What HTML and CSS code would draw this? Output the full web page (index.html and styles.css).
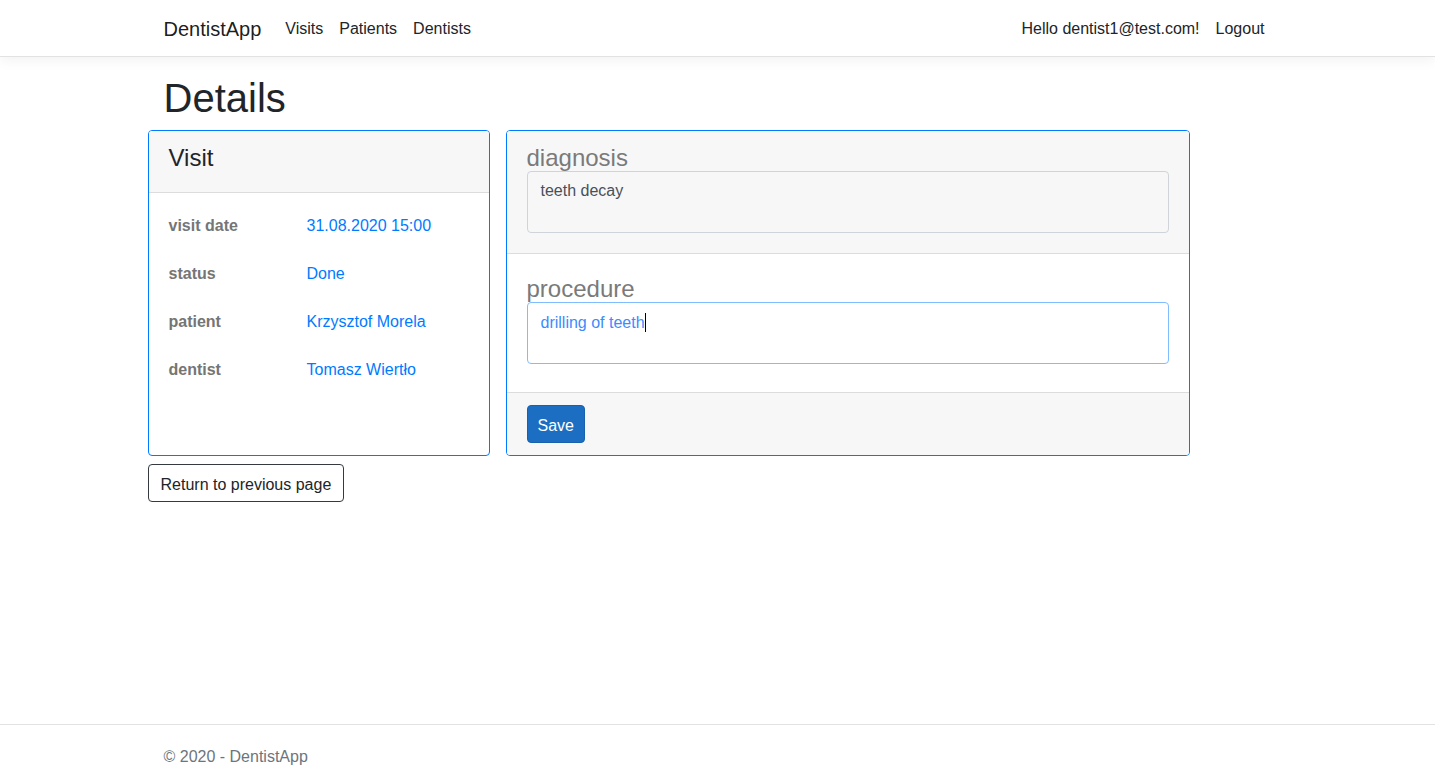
FILE: index.html
```
<!DOCTYPE html>
<html lang="en">
<head>
<meta charset="utf-8">
<title>Details - DentistApp</title>
<link rel="stylesheet" href="styles.css">
</head>
<body>
<header class="navbar">
  <div class="container nav-inner">
    <a class="brand" href="#">DentistApp</a>
    <nav class="nav-links">
      <a class="nav-link" href="#">Visits</a>
      <a class="nav-link" href="#">Patients</a>
      <a class="nav-link" href="#">Dentists</a>
    </nav>
    <div class="nav-right">
      <span class="nav-link">Hello dentist1@test.com!</span>
      <span class="nav-link">Logout</span>
    </div>
  </div>
</header>
<main class="main">
  <div class="container">
    <h1 class="page-title">Details</h1>
  </div>
  <div class="content">
    <div class="cards">
      <section class="card card-visit">
        <div class="card-header">
          <h4 class="card-title">Visit</h4>
        </div>
        <div class="card-body">
          <dl class="details">
            <div class="detail-row"><dt>visit date</dt><dd>31.08.2020 15:00</dd></div>
            <div class="detail-row"><dt>status</dt><dd>Done</dd></div>
            <div class="detail-row"><dt>patient</dt><dd>Krzysztof Morela</dd></div>
            <div class="detail-row"><dt>dentist</dt><dd>Tomasz Wiertło</dd></div>
          </dl>
        </div>
      </section>
      <section class="card card-form">
        <div class="form-sec sec-diagnosis">
          <label class="field-label">diagnosis</label>
          <div class="textbox readonly">teeth decay</div>
        </div>
        <div class="form-sec sec-procedure">
          <label class="field-label">procedure</label>
          <div class="textbox focused">drilling of teeth<span class="caret"></span></div>
        </div>
        <div class="form-footer">
          <button class="btn btn-primary" type="button">Save</button>
        </div>
      </section>
    </div>
    <button class="btn btn-outline" type="button">Return to previous page</button>
  </div>
</main>
<footer class="footer">
  <div class="container footer-text">© 2020 - DentistApp</div>
</footer>
</body>
</html>
```
FILE: styles.css
```
* { box-sizing: border-box; }
html, body { margin: 0; padding: 0; }
body {
  font-family: "Liberation Sans", Arial, sans-serif;
  font-size: 16px;
  line-height: 1.5;
  color: #212529;
  background: #fff;
  min-height: 100vh;
  display: flex;
  flex-direction: column;
}
a { text-decoration: none; color: inherit; }

.container {
  width: 1140px;
  margin: 0 auto;
  padding: 0 15px 0 16px;
}

.navbar {
  background: #fff;
  border-bottom: 1px solid #e2e2e2;
  box-shadow: 0 4px 12px rgba(0,0,0,.05);
  padding: 8px 0;
}
.nav-inner {
  display: flex;
  align-items: center;
  height: 40px;
}
.brand {
  font-size: 20px;
  line-height: 30px;
  padding-top: 2px;
  color: rgba(0,0,0,.9);
  margin-right: 16px;
}
.nav-links, .nav-right { display: flex; }
.nav-right { margin-left: auto; }
.nav-link {
  padding: 9px 8px 7px;
  color: #212529;
  line-height: 24px;
}

.main { flex: 1; padding-top: 16px; }
.page-title {
  font-size: 40px;
  font-weight: 500;
  line-height: 45px;
  padding-top: 3px;
  margin: 0 0 9px;
}
.content {
  width: 1140px;
  margin: 0 auto;
}
.cards {
  display: flex;
  gap: 16px;
  align-items: stretch;
}
.card {
  border: 1px solid #007bff;
  border-radius: 4px;
  overflow: hidden;
  display: flex;
  flex-direction: column;
}
.card-visit { width: 342px; }
.card-form { width: 684px; }

.card-header {
  background: #f7f7f7;
  border-bottom: 1px solid #dcdcdc;
  padding: 13px 20px 11px;
}
.card-title {
  margin: 0 0 8px;
  font-size: 24px;
  font-weight: 500;
  line-height: 28.8px;
}
.card-body { padding: 21px 20px 19px; flex: 1; }
.details { margin: 0; }
.detail-row {
  display: flex;
  margin-bottom: 24px;
  line-height: 24px;
}
.detail-row dt {
  width: 138px;
  font-weight: bold;
  color: #757575;
}
.detail-row dd {
  margin: 0;
  color: #007bff;
}

.form-sec { padding: 12px 20px 20px; }
.sec-diagnosis { background: #f7f7f7; border-bottom: 1px solid #dcdcdc; }
.sec-diagnosis .field-label { padding-top: 1px; line-height: 27px; }
.sec-procedure { padding: 20px 20px 28px; flex: 1; }
.sec-procedure .field-label { padding-top: 2px; line-height: 26px; }
.field-label {
  display: block;
  font-size: 24px;
  line-height: 28px;
  color: #7a7a7a;
}
.textbox {
  height: 62px;
  border: 1px solid #ced4da;
  border-radius: 4px;
  padding: 8px 12px 4px 13px;
  line-height: 24px;
  color: #495057;
}
.textbox.readonly { background: transparent; padding-top: 7px; }
.textbox.focused { border-color: #80bdff; color: #3d8bfd; background: #fff; }
.caret {
  display: inline-block;
  width: 1px;
  height: 19px;
  background: #000;
  vertical-align: -4px;
}

.form-footer {
  background: #f7f7f7;
  border-top: 1px solid #dcdcdc;
  padding: 12px 20px;
}
.btn {
  font-family: inherit;
  font-size: 16px;
  line-height: 24px;
  padding: 8px 12px 4px;
  border-radius: 4px;
  cursor: pointer;
}
.btn-primary {
  background: #1b6ec2;
  border: 1px solid #1861ac;
  color: #fff;
  padding-left: 10px;
  padding-right: 10px;
}
.btn-outline {
  margin-top: 8px;
  background: #fff;
  border: 1px solid #343a40;
  color: #212529;
}

.footer {
  border-top: 1px solid #e2e2e2;
  height: 59px;
  padding-top: 20px;
}
.footer-text {
  color: #6c757d;
  line-height: 24px;
  white-space: nowrap;
}
```
